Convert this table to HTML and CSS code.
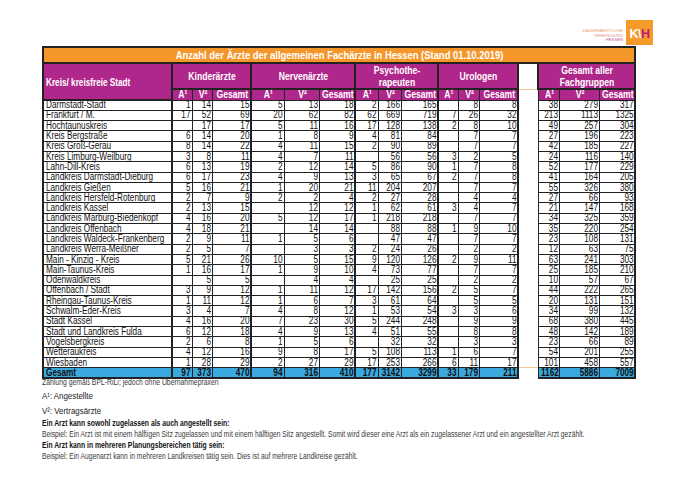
FILE: index.html
```html
<!DOCTYPE html>
<html lang="de">
<head>
<meta charset="utf-8">
<title>Anzahl der Ärzte</title>
<link rel="stylesheet" href="styles.css">
</head>
<body>
<div class="page">
  <div class="top">
    <div class="logo-text">
      <span class="l1">KASSENÄRZTLICHE</span>
      <span class="l2">VEREINIGUNG</span>
      <span class="l3">HESSEN</span>
    </div>
    <div class="logo-box"><span class="kv">K\</span><span class="h">H</span></div>
  </div>
  <table class="stats">
    <colgroup>
      <col class="c-name"><col class="c20"><col class="c20"><col class="c39">
      <col class="c33"><col class="c35"><col class="c36">
      <col class="c23"><col class="c23"><col class="c37">
      <col class="c20"><col class="c21"><col class="c39">
      <col class="c20">
      <col class="c21"><col class="c40"><col class="c36">
    </colgroup>
    <thead>
      <tr class="title-row"><th colspan="17"><span>Anzahl der Ärzte der allgemeinen Fachärzte in Hessen (Stand 01.10.2019)</span></th></tr>
      <tr class="group-row">
        <th rowspan="2" class="name-h"><span>Kreis/ kreisfreie Stadt</span></th>
        <th colspan="3" class="grp"><span>Kinderärzte</span></th>
        <th colspan="3" class="grp"><span>Nervenärzte</span></th>
        <th colspan="3" class="grp"><span>Psychothe-<br>rapeuten</span></th>
        <th colspan="3" class="grp"><span>Urologen</span></th>
        <th class="gap"></th>
        <th colspan="3" class="grp"><span>Gesamt aller<br>Fachgruppen</span></th>
      </tr>
      <tr class="sub-row">
        <th><span>A¹</span></th><th><span>V²</span></th><th class="end"><span>Gesamt</span></th>
        <th><span>A¹</span></th><th><span>V²</span></th><th class="end"><span>Gesamt</span></th>
        <th><span>A¹</span></th><th><span>V²</span></th><th class="end"><span>Gesamt</span></th>
        <th><span>A¹</span></th><th><span>V²</span></th><th class="end"><span>Gesamt</span></th>
        <th class="gap gap-line"></th>
        <th><span>A¹</span></th><th><span>V²</span></th><th class="end"><span>Gesamt</span></th>
      </tr>
    </thead>
    <tbody>
      <tr><td class="name"><span>Darmstadt-Stadt</span></td><td><span>1</span></td><td><span>14</span></td><td class="end"><span>15</span></td><td><span>5</span></td><td><span>13</span></td><td class="end"><span>18</span></td><td><span>2</span></td><td><span>166</span></td><td class="end"><span>165</span></td><td></td><td><span>8</span></td><td class="end"><span>8</span></td><td class="gap"></td><td><span>38</span></td><td><span>279</span></td><td class="end"><span>317</span></td></tr>
      <tr><td class="name"><span>Frankfurt / M.</span></td><td><span>17</span></td><td><span>52</span></td><td class="end"><span>69</span></td><td><span>20</span></td><td><span>62</span></td><td class="end"><span>82</span></td><td><span>62</span></td><td><span>669</span></td><td class="end"><span>719</span></td><td><span>7</span></td><td><span>26</span></td><td class="end"><span>32</span></td><td class="gap"></td><td><span>213</span></td><td><span>1113</span></td><td class="end"><span>1325</span></td></tr>
      <tr><td class="name"><span>Hochtaunuskreis</span></td><td></td><td><span>17</span></td><td class="end"><span>17</span></td><td><span>5</span></td><td><span>11</span></td><td class="end"><span>16</span></td><td><span>17</span></td><td><span>128</span></td><td class="end"><span>138</span></td><td><span>2</span></td><td><span>8</span></td><td class="end"><span>10</span></td><td class="gap"></td><td><span>49</span></td><td><span>257</span></td><td class="end"><span>304</span></td></tr>
      <tr><td class="name"><span>Kreis Bergstraße</span></td><td><span>6</span></td><td><span>14</span></td><td class="end"><span>20</span></td><td><span>1</span></td><td><span>8</span></td><td class="end"><span>9</span></td><td><span>4</span></td><td><span>81</span></td><td class="end"><span>84</span></td><td></td><td><span>7</span></td><td class="end"><span>7</span></td><td class="gap"></td><td><span>27</span></td><td><span>196</span></td><td class="end"><span>223</span></td></tr>
      <tr><td class="name"><span>Kreis Groß-Gerau</span></td><td><span>8</span></td><td><span>14</span></td><td class="end"><span>22</span></td><td><span>4</span></td><td><span>11</span></td><td class="end"><span>15</span></td><td><span>2</span></td><td><span>90</span></td><td class="end"><span>89</span></td><td></td><td><span>7</span></td><td class="end"><span>7</span></td><td class="gap"></td><td><span>42</span></td><td><span>185</span></td><td class="end"><span>227</span></td></tr>
      <tr><td class="name"><span>Kreis Limburg-Weilburg</span></td><td><span>3</span></td><td><span>8</span></td><td class="end"><span>11</span></td><td><span>4</span></td><td><span>7</span></td><td class="end"><span>11</span></td><td></td><td><span>56</span></td><td class="end"><span>56</span></td><td><span>3</span></td><td><span>2</span></td><td class="end"><span>5</span></td><td class="gap"></td><td><span>24</span></td><td><span>116</span></td><td class="end"><span>140</span></td></tr>
      <tr><td class="name"><span>Lahn-Dill-Kreis</span></td><td><span>6</span></td><td><span>13</span></td><td class="end"><span>19</span></td><td><span>2</span></td><td><span>12</span></td><td class="end"><span>14</span></td><td><span>5</span></td><td><span>86</span></td><td class="end"><span>90</span></td><td><span>1</span></td><td><span>7</span></td><td class="end"><span>8</span></td><td class="gap"></td><td><span>52</span></td><td><span>177</span></td><td class="end"><span>229</span></td></tr>
      <tr><td class="name"><span>Landkreis Darmstadt-Dieburg</span></td><td><span>6</span></td><td><span>17</span></td><td class="end"><span>23</span></td><td><span>4</span></td><td><span>9</span></td><td class="end"><span>13</span></td><td><span>3</span></td><td><span>65</span></td><td class="end"><span>67</span></td><td><span>2</span></td><td><span>7</span></td><td class="end"><span>8</span></td><td class="gap"></td><td><span>41</span></td><td><span>164</span></td><td class="end"><span>205</span></td></tr>
      <tr><td class="name"><span>Landkreis Gießen</span></td><td><span>5</span></td><td><span>16</span></td><td class="end"><span>21</span></td><td><span>1</span></td><td><span>20</span></td><td class="end"><span>21</span></td><td><span>11</span></td><td><span>204</span></td><td class="end"><span>207</span></td><td></td><td><span>7</span></td><td class="end"><span>7</span></td><td class="gap"></td><td><span>55</span></td><td><span>326</span></td><td class="end"><span>380</span></td></tr>
      <tr><td class="name"><span>Landkreis Hersfeld-Rotenburg</span></td><td><span>2</span></td><td><span>7</span></td><td class="end"><span>9</span></td><td><span>2</span></td><td><span>2</span></td><td class="end"><span>4</span></td><td><span>2</span></td><td><span>27</span></td><td class="end"><span>28</span></td><td></td><td><span>4</span></td><td class="end"><span>4</span></td><td class="gap"></td><td><span>27</span></td><td><span>66</span></td><td class="end"><span>93</span></td></tr>
      <tr><td class="name"><span>Landkreis Kassel</span></td><td><span>2</span></td><td><span>13</span></td><td class="end"><span>15</span></td><td></td><td><span>12</span></td><td class="end"><span>12</span></td><td><span>1</span></td><td><span>62</span></td><td class="end"><span>61</span></td><td><span>3</span></td><td><span>4</span></td><td class="end"><span>7</span></td><td class="gap"></td><td><span>21</span></td><td><span>147</span></td><td class="end"><span>168</span></td></tr>
      <tr><td class="name"><span>Landkreis Marburg-Biedenkopf</span></td><td><span>4</span></td><td><span>16</span></td><td class="end"><span>20</span></td><td><span>5</span></td><td><span>12</span></td><td class="end"><span>17</span></td><td><span>1</span></td><td><span>218</span></td><td class="end"><span>218</span></td><td></td><td><span>7</span></td><td class="end"><span>7</span></td><td class="gap"></td><td><span>34</span></td><td><span>325</span></td><td class="end"><span>359</span></td></tr>
      <tr><td class="name"><span>Landkreis Offenbach</span></td><td><span>4</span></td><td><span>18</span></td><td class="end"><span>21</span></td><td></td><td><span>14</span></td><td class="end"><span>14</span></td><td></td><td><span>88</span></td><td class="end"><span>88</span></td><td><span>1</span></td><td><span>9</span></td><td class="end"><span>10</span></td><td class="gap"></td><td><span>35</span></td><td><span>220</span></td><td class="end"><span>254</span></td></tr>
      <tr><td class="name"><span>Landkreis Waldeck-Frankenberg</span></td><td><span>2</span></td><td><span>9</span></td><td class="end"><span>11</span></td><td><span>1</span></td><td><span>5</span></td><td class="end"><span>6</span></td><td></td><td><span>47</span></td><td class="end"><span>47</span></td><td></td><td><span>7</span></td><td class="end"><span>7</span></td><td class="gap"></td><td><span>23</span></td><td><span>108</span></td><td class="end"><span>131</span></td></tr>
      <tr><td class="name"><span>Landkreis Werra-Meißner</span></td><td><span>2</span></td><td><span>5</span></td><td class="end"><span>7</span></td><td></td><td><span>3</span></td><td class="end"><span>3</span></td><td><span>2</span></td><td><span>24</span></td><td class="end"><span>26</span></td><td></td><td><span>2</span></td><td class="end"><span>2</span></td><td class="gap"></td><td><span>12</span></td><td><span>63</span></td><td class="end"><span>75</span></td></tr>
      <tr><td class="name"><span>Main - Kinzig - Kreis</span></td><td><span>5</span></td><td><span>21</span></td><td class="end"><span>26</span></td><td><span>10</span></td><td><span>5</span></td><td class="end"><span>15</span></td><td><span>9</span></td><td><span>120</span></td><td class="end"><span>126</span></td><td><span>2</span></td><td><span>9</span></td><td class="end"><span>11</span></td><td class="gap"></td><td><span>63</span></td><td><span>241</span></td><td class="end"><span>303</span></td></tr>
      <tr><td class="name"><span>Main-Taunus-Kreis</span></td><td><span>1</span></td><td><span>16</span></td><td class="end"><span>17</span></td><td><span>1</span></td><td><span>9</span></td><td class="end"><span>10</span></td><td><span>4</span></td><td><span>73</span></td><td class="end"><span>77</span></td><td></td><td><span>7</span></td><td class="end"><span>7</span></td><td class="gap"></td><td><span>25</span></td><td><span>185</span></td><td class="end"><span>210</span></td></tr>
      <tr><td class="name"><span>Odenwaldkreis</span></td><td></td><td><span>5</span></td><td class="end"><span>5</span></td><td></td><td><span>4</span></td><td class="end"><span>4</span></td><td></td><td><span>25</span></td><td class="end"><span>25</span></td><td></td><td><span>2</span></td><td class="end"><span>2</span></td><td class="gap"></td><td><span>10</span></td><td><span>57</span></td><td class="end"><span>67</span></td></tr>
      <tr><td class="name"><span>Offenbach / Stadt</span></td><td><span>3</span></td><td><span>9</span></td><td class="end"><span>12</span></td><td><span>1</span></td><td><span>11</span></td><td class="end"><span>12</span></td><td><span>17</span></td><td><span>142</span></td><td class="end"><span>156</span></td><td><span>2</span></td><td><span>5</span></td><td class="end"><span>7</span></td><td class="gap"></td><td><span>44</span></td><td><span>222</span></td><td class="end"><span>265</span></td></tr>
      <tr><td class="name"><span>Rheingau-Taunus-Kreis</span></td><td><span>1</span></td><td><span>11</span></td><td class="end"><span>12</span></td><td><span>1</span></td><td><span>6</span></td><td class="end"><span>7</span></td><td><span>3</span></td><td><span>61</span></td><td class="end"><span>64</span></td><td></td><td><span>5</span></td><td class="end"><span>5</span></td><td class="gap"></td><td><span>20</span></td><td><span>131</span></td><td class="end"><span>151</span></td></tr>
      <tr><td class="name"><span>Schwalm-Eder-Kreis</span></td><td><span>3</span></td><td><span>4</span></td><td class="end"><span>7</span></td><td><span>4</span></td><td><span>8</span></td><td class="end"><span>12</span></td><td><span>1</span></td><td><span>53</span></td><td class="end"><span>54</span></td><td><span>3</span></td><td><span>3</span></td><td class="end"><span>6</span></td><td class="gap"></td><td><span>34</span></td><td><span>99</span></td><td class="end"><span>132</span></td></tr>
      <tr><td class="name"><span>Stadt Kassel</span></td><td><span>4</span></td><td><span>16</span></td><td class="end"><span>20</span></td><td><span>7</span></td><td><span>23</span></td><td class="end"><span>30</span></td><td><span>5</span></td><td><span>244</span></td><td class="end"><span>248</span></td><td></td><td><span>9</span></td><td class="end"><span>9</span></td><td class="gap"></td><td><span>68</span></td><td><span>380</span></td><td class="end"><span>445</span></td></tr>
      <tr><td class="name"><span>Stadt und Landkreis Fulda</span></td><td><span>6</span></td><td><span>12</span></td><td class="end"><span>18</span></td><td><span>4</span></td><td><span>9</span></td><td class="end"><span>13</span></td><td><span>4</span></td><td><span>51</span></td><td class="end"><span>55</span></td><td></td><td><span>8</span></td><td class="end"><span>8</span></td><td class="gap"></td><td><span>48</span></td><td><span>142</span></td><td class="end"><span>189</span></td></tr>
      <tr><td class="name"><span>Vogelsbergkreis</span></td><td><span>2</span></td><td><span>6</span></td><td class="end"><span>8</span></td><td><span>1</span></td><td><span>5</span></td><td class="end"><span>6</span></td><td></td><td><span>32</span></td><td class="end"><span>32</span></td><td></td><td><span>3</span></td><td class="end"><span>3</span></td><td class="gap"></td><td><span>23</span></td><td><span>66</span></td><td class="end"><span>89</span></td></tr>
      <tr><td class="name"><span>Wetteraukreis</span></td><td><span>4</span></td><td><span>12</span></td><td class="end"><span>16</span></td><td><span>9</span></td><td><span>8</span></td><td class="end"><span>17</span></td><td><span>5</span></td><td><span>108</span></td><td class="end"><span>113</span></td><td><span>1</span></td><td><span>6</span></td><td class="end"><span>7</span></td><td class="gap"></td><td><span>54</span></td><td><span>201</span></td><td class="end"><span>255</span></td></tr>
      <tr><td class="name"><span>Wiesbaden</span></td><td><span>1</span></td><td><span>28</span></td><td class="end"><span>29</span></td><td><span>2</span></td><td><span>27</span></td><td class="end"><span>29</span></td><td><span>17</span></td><td><span>253</span></td><td class="end"><span>266</span></td><td><span>6</span></td><td><span>11</span></td><td class="end"><span>17</span></td><td class="gap"></td><td><span>101</span></td><td><span>458</span></td><td class="end"><span>557</span></td></tr>
      <tr class="total"><td class="name"><span>Gesamt</span></td><td><span>97</span></td><td><span>373</span></td><td class="end"><span>470</span></td><td><span>94</span></td><td><span>316</span></td><td class="end"><span>410</span></td><td><span>177</span></td><td><span>3142</span></td><td class="end"><span>3299</span></td><td><span>33</span></td><td><span>179</span></td><td class="end"><span>211</span></td><td class="gap gap-line"></td><td><span>1162</span></td><td><span>5886</span></td><td class="end"><span>7009</span></td></tr>
    </tbody>
  </table>
  <div class="notes">
    <p class="n-count">Zählung gemäß BPL-RiLi; jedoch ohne Übernahmepraxen</p>
    <p class="n-def">A¹: Angestellte</p>
    <p class="n-def">V²: Vertragsärzte</p>
    <p class="n-bold">Ein Arzt kann sowohl zugelassen als auch angestellt sein:</p>
    <p class="n-ex">Beispiel: Ein Arzt ist mit einem hälftigen Sitz zugelassen und mit einem hälftigen Sitz angestellt. Somit wird dieser eine Arzt als ein zugelassener Arzt und ein angestellter Arzt gezählt.</p>
    <p class="n-bold">Ein Arzt kann in mehreren Planungsbereichen tätig sein:</p>
    <p class="n-ex">Beispiel: Ein Augenarzt kann in mehreren Landkreisen tätig sein. Dies ist auf mehrere Landkreise gezählt.</p>
  </div>
</div>
</body>
</html>
```

FILE: styles.css
```css
* { box-sizing: border-box; }
html, body { margin: 0; padding: 0; background: #fff; }
body {
  font-family: "Liberation Sans", Arial, sans-serif;
  color: #111;
}
.page { padding: 20px 0 0 42px; }

/* logo */
.top {
  width: 611px;
  height: 26px;
  display: flex;
  justify-content: flex-end;
  align-items: stretch;
  gap: 3px;
}
.logo-text {
  display: flex;
  flex-direction: column;
  justify-content: flex-end;
  align-items: flex-end;
  font-size: 4.2px;
  line-height: 4.6px;
  padding-bottom: 3px;
}
.logo-text .l1 { color: #ec9b6c; }
.logo-text .l2 { color: #e6958a; }
.logo-text .l3 { color: #c64f96; }
.logo-box {
  width: 27px;
  height: 25px;
  background: #f39a2b;
  display: flex;
  align-items: center;
  justify-content: center;
  font-weight: bold;
  font-size: 12.5px;
  padding-top: 2px;
  letter-spacing: -0.5px;
}
.logo-box .kv { color: #fff; }
.logo-box .h { color: #c3187f; }

/* table */
.stats {
  border-collapse: collapse;
  table-layout: fixed;
  width: 592px;
  font-size: 10px;
}
.c-name { width: 129px; }
.c20 { width: 20px; }
.c21 { width: 21px; }
.c23 { width: 23px; }
.c33 { width: 33px; }
.c35 { width: 35px; }
.c36 { width: 36px; }
.c37 { width: 37px; }
.c39 { width: 39px; }
.c40 { width: 40px; }

.stats th, .stats td {
  padding: 0 1px 0 2px;
  border: 1px solid #222;
  white-space: nowrap;
}
/* narrow (condensed) lettering */
.stats th > span, .stats td > span {
  display: block;
  width: 121.95%;
  transform: scaleX(0.82);
  transform-origin: 0 50%;
}

.title-row th {
  height: 16px;
  background: #f5962b;
  color: #fff;
  font-size: 11.5px;
  font-weight: bold;
  text-align: center;
  border: 2px solid #222;
  line-height: 12px;
}
.group-row th {
  height: 24px;
  background: #b0278b;
  color: #fff;
  font-weight: bold;
  font-size: 10.5px;
  line-height: 12px;
  text-align: center;
  border: 2px solid #222;
}
.group-row th.name-h {
  text-align: left;
  padding-left: 2px;
  font-size: 10px;
  padding-top: 2px;
}
.sub-row th {
  height: 11px;
  background: #b0278b;
  color: #fff;
  font-weight: bold;
  font-size: 10.5px;
  line-height: 9px;
  text-align: center;
  border-bottom: 1px solid #222;
}
.sub-row th.end { border-right: 2px solid #222; }

.stats th.gap, .stats td.gap {
  background: #fff;
  border-top: none;
  border-bottom: none;
  padding: 0;
}
.stats .gap-line { border-top: 1px solid #f8c797 !important; }

.stats tbody td {
  height: 10.3px;
  line-height: 8px;
  text-align: right;
  font-size: 10px;
}
.stats tbody td.name {
  text-align: left;
  border-left: 2px solid #222;
  border-right: 2px solid #222;
  padding-left: 2px;
}
.stats tbody td.end { border-right: 2px solid #222; }
.stats tr.total td {
  background: #3aa9e0;
  font-weight: bold;
  border-bottom: 2px solid #222;
}
.stats tr.total td.gap { background: #fff; border-bottom: none; }

/* notes */
.notes {
  color: #333;
  transform: scaleX(0.83);
  transform-origin: 0 0;
  margin-top: -1px;
}
.notes p { margin: 0; white-space: nowrap; }
.n-count { font-size: 8.25px; line-height: 10px; color: #3a3a3a; }
.n-def { font-size: 9.5px; line-height: 15px; color: #222; }
.n-bold { font-size: 8.2px; font-weight: bold; line-height: 11px; color: #111; }
.n-ex { font-size: 8.15px; line-height: 11px; color: #3a3a3a; }
```
